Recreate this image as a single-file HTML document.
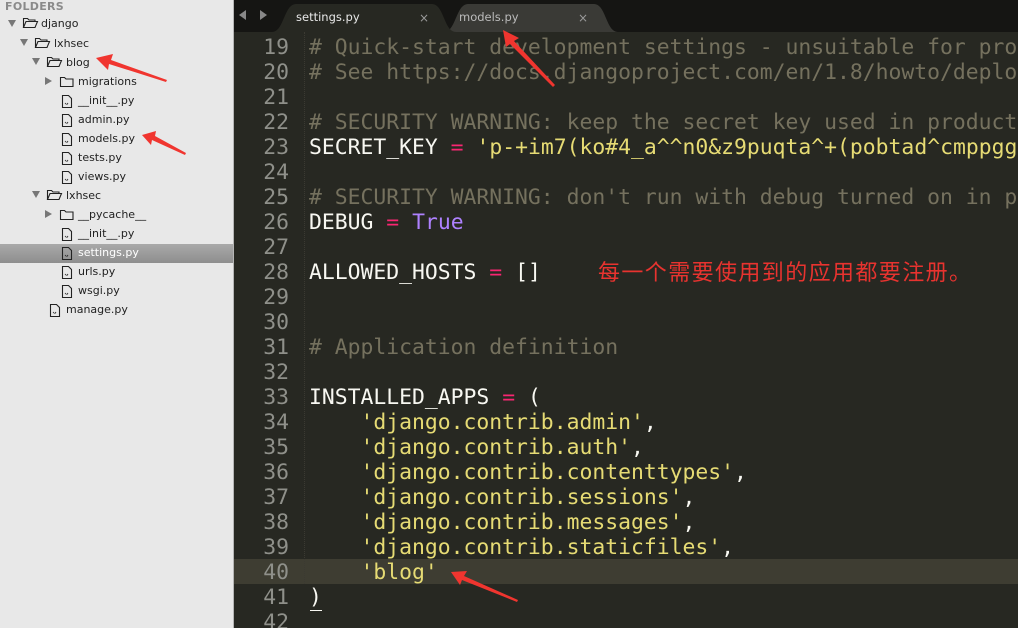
<!DOCTYPE html>
<html><head><meta charset="utf-8"><style>
*{margin:0;padding:0;box-sizing:border-box}
body{width:1018px;height:628px;overflow:hidden;background:#272822;font-family:"Liberation Sans",sans-serif;position:relative}
#side{position:absolute;left:0;top:0;width:234px;height:628px;background:#e8e8e8;border-right:1px solid #b5b5b5;overflow:hidden}
.hdr{position:absolute;left:5px;top:0;font-size:11px;font-weight:bold;color:#8a8a8a;letter-spacing:.3px;font-family:"DejaVu Sans",sans-serif}
.row{position:absolute;left:0;width:233px;height:19px;font-size:11px;color:#222;line-height:19px;font-family:"DejaVu Sans",sans-serif}
.row span{position:absolute}
.sel{background:linear-gradient(#a9a9a9,#8e8e8e);color:#fff}
#tabs{position:absolute;left:234px;top:0;width:784px;height:32px;background:#151513;overflow:hidden}
#ed{position:absolute;left:234px;top:32px;width:784px;height:596px;background:#272822;font-family:"DejaVu Sans Mono","Liberation Mono",monospace;font-size:21.4px;overflow:hidden}
.ln{position:absolute;left:0;width:784px;height:25px;line-height:25px;white-space:pre}
.ln .n{position:absolute;left:0;width:55px;text-align:right;color:#8f908a}
.ln .c{position:absolute;left:75px;color:#f8f8f2}
.ln .cm{color:#75715e}.k{color:#f92672}.s{color:#e6db74}.p{color:#ae81ff}
</style></head><body>
<div id="side">
<div class="hdr">FOLDERS</div>
<div class="row sel" style="top:244px"></div>
<svg width="234" height="628" style="position:absolute;left:0;top:0" fill="none" stroke="#222" stroke-width="1.1">
<g fill="#777" stroke="none">
<polygon points="8,20 16,20 12,27"/><polygon points="20,39 28,39 24,46"/><polygon points="32,58 40,58 36,65"/>
<polygon points="45,77 52,81 45,85"/><polygon points="32,191 40,191 36,198"/><polygon points="45,210 52,214 45,218"/>
</g>
<g id="of"><path d="M23.5,27.5 v-9 h4 l1.5,1.5 h6 v2 M23.5,27.5 l2.5,-6 h11.5 l-2.5,6 z"/></g>
<use href="#of" x="12" y="20"/><use href="#of" x="24" y="39"/><use href="#of" x="24" y="172"/>
<path d="M60.5,86.5 v-9 h4 l1.5,1.5 h7 v7.5 z"/><path d="M60.5,219.5 v-9 h4 l1.5,1.5 h7 v7.5 z"/>
<g id="fi"><path d="M62.5,95.5 h6 l3,3 v9 h-9 z"/><path d="M65,103 l1.5,1.5 M68,103 l-1,1.5" stroke-width=".8"/></g>
<use href="#fi" y="19"/><use href="#fi" y="38"/><use href="#fi" y="57"/><use href="#fi" y="76"/>
<use href="#fi" y="133"/><use href="#fi" y="152"/><use href="#fi" y="171"/><use href="#fi" y="190"/><use href="#fi" x="-12" y="209"/>
</svg>
<div class="row" style="top:14px"><span style="left:41px">django</span></div>
<div class="row" style="top:34px"><span style="left:54px">lxhsec</span></div>
<div class="row" style="top:53px"><span style="left:66px">blog</span></div>
<div class="row" style="top:72px"><span style="left:78px">migrations</span></div>
<div class="row" style="top:91px"><span style="left:78px">__init__.py</span></div>
<div class="row" style="top:110px"><span style="left:78px">admin.py</span></div>
<div class="row" style="top:129px"><span style="left:78px">models.py</span></div>
<div class="row" style="top:148px"><span style="left:78px">tests.py</span></div>
<div class="row" style="top:167px"><span style="left:78px">views.py</span></div>
<div class="row" style="top:186px"><span style="left:66px">lxhsec</span></div>
<div class="row" style="top:205px"><span style="left:78px">__pycache__</span></div>
<div class="row" style="top:224px"><span style="left:78px">__init__.py</span></div>
<div class="row" style="top:243px;color:#fff"><span style="left:78px">settings.py</span></div>
<div class="row" style="top:262px"><span style="left:78px">urls.py</span></div>
<div class="row" style="top:281px"><span style="left:78px">wsgi.py</span></div>
<div class="row" style="top:300px"><span style="left:66px">manage.py</span></div>
</div>
<div id="tabs">
<svg width="784" height="32" style="position:absolute;left:0;top:0">
<polygon points="5,15 12,10 12,20" fill="#888"/><polygon points="26,10 33,15 26,20" fill="#888"/>
<path d="M210,32 C222,32 222,4 234,4 H360 C372,4 372,32 384,32 Z" fill="#3a3a36"/>
<path d="M38,32 C50,32 50,4 62,4 H198 C210,4 210,32 222,32 Z" fill="#272822"/>
<text x="62" y="21" font-family="DejaVu Sans" font-size="11.5" fill="#e8e8e8">settings.py</text>
<text x="185" y="22" font-family="DejaVu Sans" font-size="12" fill="#999">×</text>
<text x="225" y="21" font-family="DejaVu Sans" font-size="11.5" fill="#bbb">models.py</text>
<text x="344" y="22" font-family="DejaVu Sans" font-size="12" fill="#999">×</text>
</svg>
</div>
<div id="ed">
<div style="position:absolute;left:0;top:527px;width:784px;height:25px;background:#3e3d32"></div>
<div style="position:absolute;left:70px;top:0;width:0;height:552px;border-left:1px dotted #3b3a32"></div>
<div class="ln" style="top:3px"><span class="n">19</span><span class="c cm"># Quick-start development settings - unsuitable for production</span></div>
<div class="ln" style="top:28px"><span class="n">20</span><span class="c cm"># See https://docs.djangoproject.com/en/1.8/howto/deployment/</span></div>
<div class="ln" style="top:53px"><span class="n">21</span></div>
<div class="ln" style="top:78px"><span class="n">22</span><span class="c cm"># SECURITY WARNING: keep the secret key used in production</span></div>
<div class="ln" style="top:103px"><span class="n">23</span><span class="c">SECRET_KEY <span class="k">=</span> <span class="s">'p-+im7(ko#4_a^^n0&amp;z9puqta^+(pobtad^cmppgg</span></span></div>
<div class="ln" style="top:128px"><span class="n">24</span></div>
<div class="ln" style="top:153px"><span class="n">25</span><span class="c cm"># SECURITY WARNING: don't run with debug turned on in prod</span></div>
<div class="ln" style="top:178px"><span class="n">26</span><span class="c">DEBUG <span class="k">=</span> <span class="p">True</span></span></div>
<div class="ln" style="top:203px"><span class="n">27</span></div>
<div class="ln" style="top:228px"><span class="n">28</span><span class="c">ALLOWED_HOSTS <span class="k">=</span> []</span></div>
<div class="ln" style="top:253px"><span class="n">29</span></div>
<div class="ln" style="top:278px"><span class="n">30</span></div>
<div class="ln" style="top:303px"><span class="n">31</span><span class="c cm"># Application definition</span></div>
<div class="ln" style="top:328px"><span class="n">32</span></div>
<div class="ln" style="top:353px"><span class="n">33</span><span class="c">INSTALLED_APPS <span class="k">=</span> (</span></div>
<div class="ln" style="top:378px"><span class="n">34</span><span class="c">    <span class="s">'django.contrib.admin'</span>,</span></div>
<div class="ln" style="top:403px"><span class="n">35</span><span class="c">    <span class="s">'django.contrib.auth'</span>,</span></div>
<div class="ln" style="top:428px"><span class="n">36</span><span class="c">    <span class="s">'django.contrib.contenttypes'</span>,</span></div>
<div class="ln" style="top:453px"><span class="n">37</span><span class="c">    <span class="s">'django.contrib.sessions'</span>,</span></div>
<div class="ln" style="top:478px"><span class="n">38</span><span class="c">    <span class="s">'django.contrib.messages'</span>,</span></div>
<div class="ln" style="top:503px"><span class="n">39</span><span class="c">    <span class="s">'django.contrib.staticfiles'</span>,</span></div>
<div class="ln" style="top:528px"><span class="n">40</span><span class="c">    <span class="s">'blog'</span></span></div>
<div class="ln" style="top:553px"><span class="n">41</span><span class="c">)</span></div>
<div class="ln" style="top:578px"><span class="n">42</span></div>
<div style="position:absolute;left:76px;top:578px;width:12px;border-top:1px solid #f8f8f2"></div>
</div>
<div style="position:absolute;left:598px;top:258px;font-family:'Liberation Sans','Noto Sans CJK SC',sans-serif;font-size:22px;letter-spacing:1.4px;color:#e8332f;line-height:30px;white-space:nowrap">每一个需要使用到的应用都要注册。</div>
<svg width="1018" height="628" style="position:absolute;left:0;top:0" fill="#f0352f">
<polygon points="96,58 113,54 111,60 167,80 166,82 109,64 108,70"/>
<polygon points="142,135 156,131 155,136 186,153 185,155 152,140 151,145"/>
<polygon points="503,30 519,38 514,41 555,85 553,87 510,44 506,47"/>
<polygon points="451,572 467,571 464,576 518,600 517,602 462,580 460,585"/>
</svg>
</body></html>
